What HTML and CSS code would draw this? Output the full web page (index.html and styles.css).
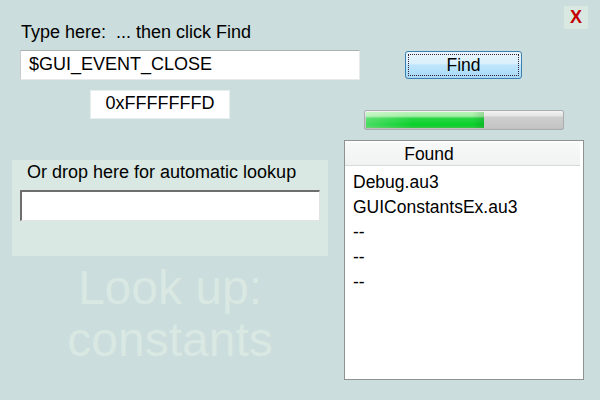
FILE: index.html
```html
<!DOCTYPE html>
<html>
<head>
<meta charset="utf-8">
<link rel="stylesheet" href="styles.css">
</head>
<body>
<div class="app">
  <div class="row row-title">
    <div class="title">Type here:&nbsp; ... then click Find</div>
    <div class="close">X</div>
  </div>
  <div class="row row-input">
    <div class="input input-main">$GUI_EVENT_CLOSE</div>
    <div class="find"><span class="find-focus">Find</span></div>
  </div>
  <div class="row row-result">
    <div class="hexbox">0xFFFFFFFD</div>
    <div class="progress"><div class="progress-fill" style="width: 60%"></div></div>
  </div>
  <div class="row row-bottom">
    <div class="left-col">
      <div class="group">
        <div class="group-label">Or drop here for automatic lookup</div>
        <div class="input input-drop"></div>
      </div>
      <div class="watermark">Look up:<br>constants</div>
    </div>
    <div class="list">
      <div class="list-header"><span class="list-col">Found</span></div>
      <div class="list-body">
        <div class="list-item">Debug.au3</div>
        <div class="list-item">GUIConstantsEx.au3</div>
        <div class="list-item">--</div>
        <div class="list-item">--</div>
        <div class="list-item">--</div>
      </div>
    </div>
  </div>
</div>
</body>
</html>
```
FILE: styles.css
```css
* { box-sizing: border-box; }
html, body { margin: 0; padding: 0; }
body {
  font-family: "Liberation Sans", Arial, sans-serif;
  font-size: 18px;
  color: #000;
}
.app {
  width: 600px;
  height: 400px;
  background: #cbdddc;
  overflow: hidden;
  display: flex;
  flex-direction: column;
}
.row { display: flex; align-items: flex-start; }

.row-title {
  justify-content: space-between;
  padding-top: 6px;
  height: 50px;
}
.title {
  margin-top: 16px;
  margin-left: 21px;
  line-height: 20px;
}
.close {
  width: 24px;
  height: 23px;
  margin-right: 12px;
  background: #dae8e2;
  color: #c40000;
  font-weight: bold;
  font-size: 18px;
  line-height: 23px;
  text-align: center;
}

.row-input { height: 40px; }
.input {
  background: #fff;
}
.input-main {
  margin-left: 20px;
  width: 340px;
  height: 30px;
  border-top: 1px solid #a9b1b1;
  border-left: 1px solid #c8cccc;
  border-right: 1px solid #e6eaea;
  border-bottom: 1px solid #e6eaea;
  padding-left: 8px;
  line-height: 26px;
}
.find {
  margin-left: 45px;
  margin-top: 1px;
  width: 117px;
  height: 28px;
  border: 1px solid #3c7fb1;
  border-radius: 3px;
  background: linear-gradient(to bottom, #eaf6fd 0%, #d9f0fc 45%, #bee6fd 50%, #a7d9f5 100%);
  padding: 2px;
  display: flex;
}
.find-focus {
  flex: 1;
  border: 1px dotted #3a2030;
  text-align: center;
  line-height: 20px;
  font-size: 17.5px;
}

.row-result { height: 50px; }
.hexbox {
  margin-left: 90px;
  width: 140px;
  height: 29px;
  background: #fff;
  border: 1px solid #e8eeee;
  text-align: center;
  line-height: 25px;
}
.progress {
  margin-left: 134px;
  margin-top: 20px;
  width: 200px;
  height: 20px;
  border: 1px solid #a9adad;
  border-radius: 2px;
  background: linear-gradient(to bottom, #f2f2f2 0%, #e6e6e6 25%, #cdcdcd 35%, #c6c6c6 90%, #bdbdbd 100%);
  padding: 1px;
}
.progress-fill {
  height: 100%;
  background:
    linear-gradient(to right, rgba(255,255,255,0.25) 0%, rgba(255,255,255,0) 40%, rgba(0,0,0,0) 90%, rgba(0,60,0,0.15) 100%),
    linear-gradient(to bottom, #b8f5b8 0%, #a6eea8 25%, #2ad645 40%, #06d12a 80%, #37c846 100%);
}

.row-bottom { flex: 1; }
.left-col {
  margin-left: 12px;
  width: 316px;
  padding-top: 20px;
}
.group {
  height: 96px;
  background: #d9e8e2;
  padding-top: 2px;
}
.group-label {
  padding-left: 15px;
  line-height: 20px;
}
.input-drop {
  margin-top: 8px;
  margin-left: 8px;
  width: 300px;
  height: 31px;
  border-top: 2px solid #6e6e6e;
  border-left: 2px solid #6e6e6e;
  border-right: 1px solid #e3e3e3;
  border-bottom: 1px solid #e3e3e3;
}
.watermark {
  margin-top: 6px;
  text-align: center;
  font-size: 48px;
  line-height: 52px;
  color: #d9e8e3;
}

.list {
  margin-left: 16px;
  width: 240px;
  height: 240px;
  background: #fff;
  border: 1px solid #8d9292;
  font-size: 17.5px;
}
.list-header {
  height: 25px;
  background: linear-gradient(to bottom, #ffffff 0%, #f7f8f8 10%, #f1f3f3 100%);
  border-bottom: 1px solid #d5d9d9;
  margin-right: 3px;
  display: flex;
}
.list-col {
  width: 168px;
  text-align: center;
  line-height: 27px;
}
.list-body {
  padding-top: 4px;
}
.list-item {
  padding-left: 8px;
  height: 25px;
  line-height: 25px;
}
```
